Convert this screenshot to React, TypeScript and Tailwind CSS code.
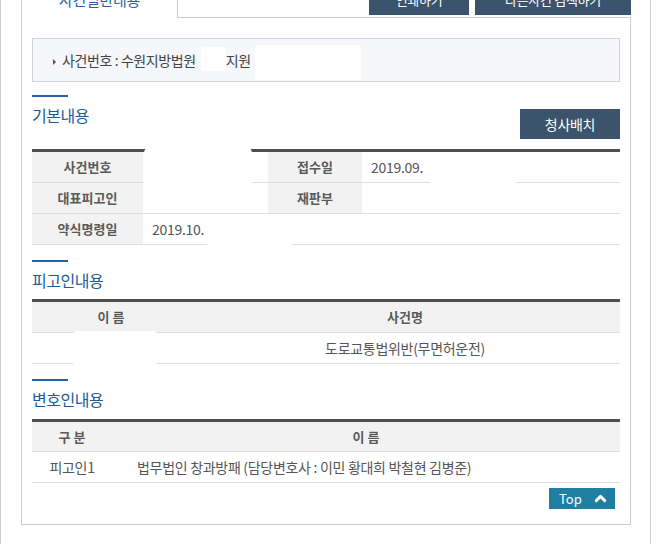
import { ChevronUp } from 'lucide-react'

function SectionTitle({ title }: { title: string }) {
  return (
    <div className="flex flex-col">
      <div className="h-[2px] w-[36px] bg-[#2560a8]" />
      <h2 className="mt-[8px] text-[16px] leading-[20px] tracking-[-0.5px] text-[#1d5b9a]">{title}</h2>
    </div>
  )
}

function Label({ w, children }: { w: string; children: React.ReactNode }) {
  return (
    <div className={`${w} flex items-center justify-center bg-[#f2f2f2] text-[13px] font-bold tracking-normal text-[#5a5a5a]`}>
      {children}
    </div>
  )
}

export default function App() {
  return (
    <div className="relative h-[544px] w-[651px] overflow-hidden border-x border-[#cccccc] bg-white pl-[20px] font-['Noto_Sans_CJK_KR','Liberation_Sans',sans-serif] text-[14px] tracking-[-0.3px] text-[#555]">
      <div className="-mt-[16px] w-[610px]">
        {/* tabs */}
        <div className="flex h-[34px]">
          <div className="flex w-[157px] justify-center border-x border-[#cccccc] pt-[6px] text-[15px] leading-[20px] text-[#2d5e9e]">
            사건일반내용
          </div>
          <div className="flex flex-1 items-start justify-end gap-[6px] border-b border-[#cccccc]">
            <button className="h-[31px] w-[100px] bg-[#3b546b] text-[13px] text-white">인쇄하기</button>
            <button className="h-[31px] w-[156px] bg-[#3b546b] text-[13px] text-white">다른사건 검색하기</button>
          </div>
        </div>

        {/* body */}
        <div className="border-x border-b border-[#cccccc] px-[10px] pb-[15px] pt-[20px]">
          <div className="flex h-[44px] items-center border border-[#cfd3dc] bg-[#f5f7fb] pl-[20px] text-[14px] tracking-[-0.4px] text-[#444]">
            <span className="mr-[6px] mt-[4px] h-0 w-0 border-y-[3px] border-l-[3px] border-y-transparent border-l-[#555]" />
            <span>사건번호 : 수원지방법원</span>
            <span className="inline-block w-[30px]" />
            <span>지원</span>
          </div>

          {/* 기본내용 */}
          <div className="mt-[13px] flex h-[54px] items-start justify-between">
            <SectionTitle title="기본내용" />
            <button className="mt-[14px] h-[30px] w-[100px] bg-[#3b546b] text-[14px] text-white">청사배치</button>
          </div>
          <div className="border-t-[3px] border-[#4f4f4f]">
            <div className="flex h-[31px] border-b border-[#dddddd]">
              <Label w="w-[111px]">사건번호</Label>
              <div className="w-[125px]" />
              <Label w="w-[94px]">접수일</Label>
              <div className="flex flex-1 items-center pl-[9px]">2019.09.</div>
            </div>
            <div className="flex h-[31px] border-b border-[#dddddd]">
              <Label w="w-[111px]">대표피고인</Label>
              <div className="w-[125px]" />
              <Label w="w-[94px]">재판부</Label>
              <div className="flex-1" />
            </div>
            <div className="flex h-[31px] border-b border-[#dddddd]">
              <Label w="w-[111px]">약식명령일</Label>
              <div className="flex flex-1 items-center pl-[9px]">2019.10.</div>
            </div>
          </div>

          {/* 피고인내용 */}
          <div className="mt-[15px]">
            <SectionTitle title="피고인내용" />
          </div>
          <div className="mt-[9px] border-t-[3px] border-[#4f4f4f]">
            <div className="flex h-[31px] border-b border-[#dddddd] bg-[#f2f2f2] text-[13px] font-bold tracking-normal text-[#5a5a5a]">
              <div className="flex w-[158px] items-center justify-center">이 름</div>
              <div className="flex flex-1 items-center justify-center">사건명</div>
            </div>
            <div className="flex h-[31px] border-b border-[#dddddd]">
              <div className="w-[158px]" />
              <div className="flex flex-1 items-center justify-center">도로교통법위반(무면허운전)</div>
            </div>
          </div>

          {/* 변호인내용 */}
          <div className="mt-[15px]">
            <SectionTitle title="변호인내용" />
          </div>
          <div className="mt-[10px] border-t-[3px] border-[#4f4f4f]">
            <div className="flex h-[30px] border-b border-[#dddddd] bg-[#f2f2f2] text-[13px] font-bold tracking-normal text-[#5a5a5a]">
              <div className="flex w-[80px] items-center justify-center">구 분</div>
              <div className="flex flex-1 items-center justify-center">이 름</div>
            </div>
            <div className="flex h-[31px] border-b border-[#dddddd]">
              <div className="flex w-[80px] items-center justify-center">피고인1</div>
              <div className="flex flex-1 items-center pl-[25px]">
                법무법인 창과방패 (담당변호사 : 이민 황대희 박철현 김병준)
              </div>
            </div>
          </div>

          <div className="mt-[5px] flex justify-end pr-[5px]">
            <button className="flex h-[21px] w-[66px] items-center justify-between bg-[#207ea0] pl-[10px] pr-[6px] text-[13px] tracking-normal text-white">
              Top
              <ChevronUp size={17} strokeWidth={4} />
            </button>
          </div>
        </div>
      </div>

      {/* redaction patches */}
      <div className="absolute left-[200px] top-[47px] h-[24px] w-[25px] rounded-[3px] bg-white" />
      <div className="absolute left-[254px] top-[45px] h-[35px] w-[106px] rounded-[4px] bg-white" />
      <div className="absolute left-[143px] top-[147px] h-[65px] w-[108px] rounded-[6px] bg-white" />
      <div className="absolute left-[429px] top-[153px] h-[31px] w-[87px] rounded-[3px] bg-white" />
      <div className="absolute left-[206px] top-[215px] h-[31px] w-[86px] rounded-[3px] bg-white" />
      <div className="absolute left-[72px] top-[331px] h-[35px] w-[84px] rounded-[4px] bg-white" />
    </div>
  )
}
